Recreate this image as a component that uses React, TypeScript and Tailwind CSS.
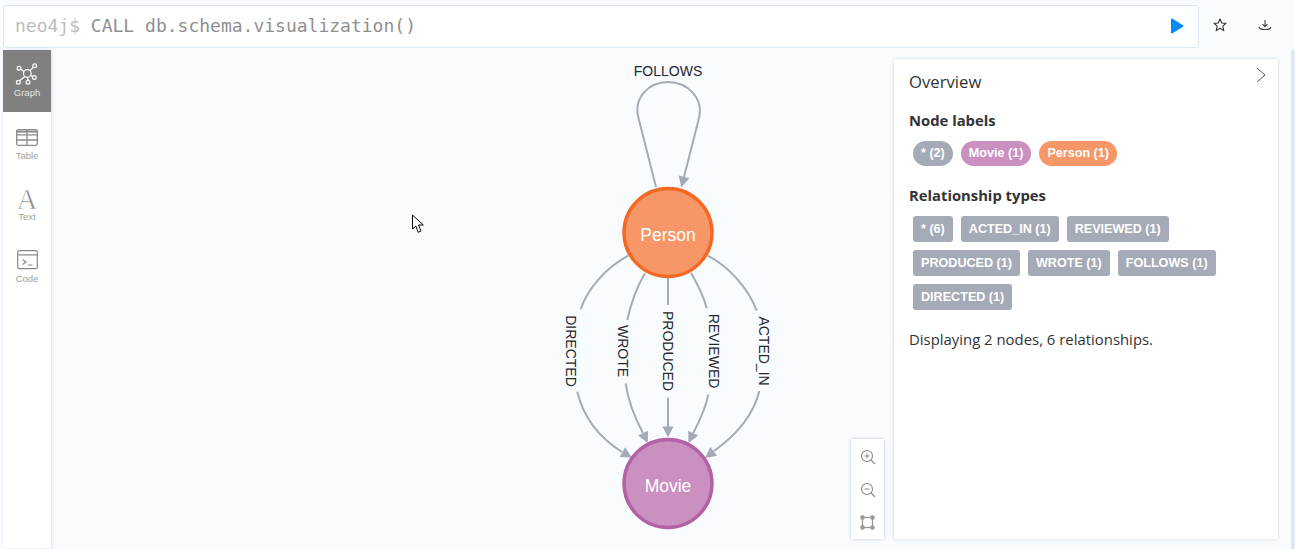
import React from "react";

const EDGE = "#a5abb6";

function Arrow({ tip, from }: { tip: [number, number]; from: [number, number] }) {
  const dx = tip[0] - from[0];
  const dy = tip[1] - from[1];
  const l = Math.hypot(dx, dy);
  const ux = dx / l;
  const uy = dy / l;
  const bx = tip[0] - ux * 11;
  const by = tip[1] - uy * 11;
  const w = 5.6;
  return (
    <polygon
      fill={EDGE}
      points={`${tip[0]},${tip[1]} ${bx - uy * w},${by + ux * w} ${bx + uy * w},${by - ux * w}`}
    />
  );
}

function EdgeLabel({ x, y, children }: { x: number; y: number; children: string }) {
  return (
    <text
      transform={`translate(${x} ${y}) rotate(90)`}
      textAnchor="middle"
      fontSize="14"
      fill="#23252c"
      fontFamily="'Liberation Sans', sans-serif"
    >
      {children}
    </text>
  );
}

function Graph() {
  const line = { fill: "none", stroke: EDGE, strokeWidth: 2 };
  return (
    <svg className="block h-[499px] w-[843px]" viewBox="51 50 843 499">
      <path {...line} d="M656 187 L639 120 C632 97 650 82 668 82 C686 82 705 97 698.500 120 L684 177" />
      <Arrow tip={[681.300, 187.500]} from={[684, 177]} />
      <text x="668" y="76" textAnchor="middle" fontSize="14" fill="#23252c" fontFamily="'Liberation Sans', sans-serif">FOLLOWS</text>

      <path {...line} d="M628.300 255.700 C605 268 587 290 580.700 309.300" />
      <path {...line} d="M577.300 391.700 C584 420 600 438 622 452" />
      <Arrow tip={[632, 457.500]} from={[622, 452]} />
      <EdgeLabel x={566} y={351}>DIRECTED</EdgeLabel>

      <path {...line} d="M645 273.300 C638 285 631 303 627.300 320" />
      <path {...line} d="M625.700 383.300 C628 400 635 418 643 433" />
      <Arrow tip={[647.800, 443]} from={[643, 433]} />
      <EdgeLabel x={618} y={351}>WROTE</EdgeLabel>

      <path {...line} d="M668 277 L668 305" />
      <path {...line} d="M668 397.700 L668 427" />
      <Arrow tip={[668, 437.500]} from={[668, 427]} />
      <EdgeLabel x={663} y={351}>PRODUCED</EdgeLabel>

      <path {...line} d="M691 272.700 C698 285 704 297 706.700 308.300" />
      <path {...line} d="M708.300 394.300 C706 408 700 420 693.300 433" />
      <Arrow tip={[688.500, 443]} from={[693.300, 433]} />
      <EdgeLabel x={708.500} y={351}>REVIEWED</EdgeLabel>

      <path {...line} d="M707.700 255.700 C730 267 749 290 756.700 310.700" />
      <path {...line} d="M759.300 391 C753 417 735 436 714 451" />
      <Arrow tip={[705, 458]} from={[714, 451]} />
      <EdgeLabel x={759} y={351}>ACTED_IN</EdgeLabel>

      <circle cx="668" cy="232.500" r="44" fill="#f79767" stroke="#f36924" strokeWidth="3.500" />
      <text x="668" y="240.500" textAnchor="middle" fontSize="17.500" fill="#ffffff" fontFamily="'Liberation Sans', sans-serif">Person</text>
      <circle cx="668" cy="483.500" r="44" fill="#c990c0" stroke="#b261a5" strokeWidth="3.500" />
      <text x="668" y="491.500" textAnchor="middle" fontSize="17.500" fill="#ffffff" fontFamily="'Liberation Sans', sans-serif">Movie</text>

      <path
        d="M412.500 215 L412.500 229 L415.800 226 L418.300 232.300 L421 231 L418.500 225 L423.300 225 Z"
        fill="#ffffff"
        stroke="#000000"
        strokeWidth="1"
        strokeLinejoin="round"
      />
    </svg>
  );
}

function GraphIcon({ color }: { color: string }) {
  return (
    <svg width="24" height="24" viewBox="0 0 24 24" fill="none" stroke={color} strokeWidth="1.200">
      <circle cx="12.300" cy="10.500" r="3.800" />
      <circle cx="4" cy="5.300" r="1.900" />
      <circle cx="19.700" cy="2.700" r="1.900" />
      <circle cx="19.300" cy="14.500" r="1.900" />
      <circle cx="13" cy="19.300" r="1.900" />
      <circle cx="3.300" cy="19.300" r="1.900" />
      <path d="M5.600 6.300 L9.200 8.500 M18.400 4.100 L15 7.800 M17.600 13.700 L15.700 12.300 M12.700 14.300 L12.900 17.400 M4.500 17.800 L10 13.500" />
    </svg>
  );
}

function TableIcon() {
  return (
    <svg width="22" height="17" viewBox="0 0 22 17" fill="none" stroke="#8a8a8a" strokeWidth="1.300">
      <rect x="0.700" y="0.700" width="20.600" height="15.600" rx="1.500" />
      <path d="M0.700 5.800 H21.300 M0.700 11 H21.300 M11 0.700 V16.300" />
      <path d="M0.700 2.600 H21.300" strokeWidth="2" />
    </svg>
  );
}

function CodeIcon() {
  return (
    <svg width="21" height="20" viewBox="0 0 21 20" fill="none" stroke="#8a8a8a" strokeWidth="1.200">
      <rect x="0.700" y="0.700" width="19.600" height="18" rx="1.500" />
      <path d="M0.700 4.800 H20.300 M5.500 9.500 L9 12 L5.500 14.500 M11 15 H15.500" />
    </svg>
  );
}

function NavItem({
  label,
  active,
  icon,
  className,
}: {
  label: string;
  active?: boolean;
  icon: React.ReactNode;
  className?: string;
}) {
  return (
    <div
      className={`flex h-[62px] flex-col items-center font-['Liberation_Sans',sans-serif] text-[9.500px] leading-[12px] ${
        active ? "bg-[#808080] text-[#e6e6e6]" : "text-[#a0a0a0]"
      } ${className ?? ""}`}
    >
      {icon}
      <span>{label}</span>
    </div>
  );
}

function Chip({ children, pill }: { children: string; pill?: string }) {
  return (
    <span
      className={`flex items-center px-[8px] font-['Liberation_Sans',sans-serif] text-[12.600px] font-bold text-white ${
        pill ? `h-[25px] rounded-[12.500px] ${pill}` : "h-[26px] rounded-[3px] bg-[#a5abb6]"
      }`}
    >
      {children}
    </span>
  );
}

export default function App() {
  return (
    <div className="h-[549px] w-[1295px] overflow-hidden bg-[#f9fcff]">
      <div className="flex h-[50px] pl-[3px] pt-[5px]">
        <div className="flex h-[43px] w-[1196px] items-center justify-between rounded-[3px] border border-[#dce7f2] bg-white pb-[2px] pl-[11px] pr-[14px]">
          <div className="font-['DejaVu_Sans_Mono',monospace] text-[18px] whitespace-pre">
            <span className="text-[#bcbcbc]">neo4j$ </span>
            <span className="text-[#8f8f8f]">CALL db.schema.visualization()</span>
          </div>
          <svg width="14" height="16" viewBox="0 0 14 16">
            <path d="M1 1.500 V14.500 C1 15.300 1.800 15.700 2.500 15.300 L13 8.800 C13.600 8.400 13.600 7.600 13 7.200 L2.500 0.700 C1.800 0.300 1 0.700 1 1.500 Z" fill="#018bff" />
          </svg>
        </div>
        <div className="flex w-[44px] items-center justify-center self-stretch pb-[5px] pr-[3px]">
          <svg width="14" height="14" viewBox="0 0 14 14" fill="none" stroke="#333" strokeWidth="1.100" strokeLinejoin="round">
            <path d="M7 1 L8.800 5 L13 5.400 L9.800 8.200 L10.800 12.600 L7 10.300 L3.200 12.600 L4.200 8.200 L1 5.400 L5.200 5 Z" />
          </svg>
        </div>
        <div className="flex w-[44px] items-center justify-center self-stretch pb-[5px]">
          <svg width="14" height="14" viewBox="0 0 14 14" fill="none" stroke="#444" strokeWidth="1.100">
            <path d="M7 2 V8.500 M4.500 6.200 L7 8.700 L9.500 6.200 M1 9 C1.500 11 3 11.500 7 11.500 C11 11.500 12.500 11 13 9" />
          </svg>
        </div>
      </div>
      <div className="flex h-[499px] pl-[3px]">
        <div className="mb-[1px] w-[48px] rounded-bl-[3px] bg-white shadow-[1px_0_3px_rgba(120,140,170,0.25)]">
          <NavItem label="Graph" active className="pt-[13px]" icon={<GraphIcon color="#ffffff" />} />
          <NavItem label="Table" className="pt-[17px]" icon={<div className="mb-[4px]"><TableIcon /></div>} />
          <NavItem
            label="Text"
            className="pt-[13px]"
            icon={
              <span className="h-[24px] font-['Liberation_Serif',serif] text-[29px] leading-[24px] text-[#8a8a8a] [-webkit-text-stroke:0.6px_white]">A</span>
            }
          />
          <NavItem label="Code" className="pt-[14px]" icon={<div className="mb-[3px]"><CodeIcon /></div>} />
        </div>
        <div className="relative w-[843px]">
          <Graph />
          <div className="absolute right-[10px] bottom-[10px] flex h-[100px] w-[33px] flex-col items-center bg-white pt-[1px] shadow-[0_0_3px_rgba(120,140,170,0.45)]">
            <div className="flex h-[33px] items-center">
              <svg width="16" height="16" viewBox="0 0 16 16" fill="none" stroke="#8a8a8a" strokeWidth="1.100">
                <circle cx="7" cy="7" r="5.500" />
                <path d="M11 11 L15 15 M4.500 7 H9.500 M7 4.500 V9.500" />
              </svg>
            </div>
            <div className="flex h-[33px] items-center">
              <svg width="16" height="16" viewBox="0 0 16 16" fill="none" stroke="#8a8a8a" strokeWidth="1.100">
                <circle cx="7" cy="7" r="5.500" />
                <path d="M11 11 L15 15 M4.500 7 H9.500" />
              </svg>
            </div>
            <div className="flex h-[33px] items-center">
              <svg width="15" height="15" viewBox="0 0 15 15" fill="none" stroke="#9a9a9a" strokeWidth="1.300">
                <rect x="2.500" y="2.500" width="10" height="10" />
                <rect x="1" y="1" width="3" height="3" rx="1" fill="#9a9a9a" />
                <rect x="11" y="1" width="3" height="3" rx="1" fill="#9a9a9a" />
                <rect x="1" y="11" width="3" height="3" rx="1" fill="#9a9a9a" />
                <rect x="11" y="11" width="3" height="3" rx="1" fill="#9a9a9a" />
              </svg>
            </div>
          </div>
        </div>
        <div className="relative mt-[9px] mb-[10px] w-[384px] bg-white px-[15px] font-['Open_Sans',sans-serif] text-[#333] shadow-[0_0_3px_rgba(120,140,170,0.35)]">
          <svg className="absolute top-[8px] right-[11px]" width="12" height="16" viewBox="0 0 12 16" fill="none" stroke="#555" strokeWidth="1">
            <path d="M2 1 L10 8 L2 15" />
          </svg>
          <h2 className="pt-[12px] text-[16.700px] leading-[22px] font-normal">Overview</h2>
          <h3 className="mt-[17px] text-[14.800px] leading-[20px] font-bold">Node labels</h3>
          <div className="mt-[11px] flex gap-x-[8px] pl-[4px]">
            <Chip pill="bg-[#a5abb6]">* (2)</Chip>
            <Chip pill="bg-[#c990c0]">Movie (1)</Chip>
            <Chip pill="bg-[#f79767]">Person (1)</Chip>
          </div>
          <h3 className="mt-[19px] text-[14.800px] leading-[20px] font-bold">Relationship types</h3>
          <div className="mt-[11px] flex flex-wrap gap-x-[8px] gap-y-[8px] pl-[4px]">
            <Chip>* (6)</Chip>
            <Chip>ACTED_IN (1)</Chip>
            <Chip>REVIEWED (1)</Chip>
            <Chip>PRODUCED (1)</Chip>
            <Chip>WROTE (1)</Chip>
            <Chip>FOLLOWS (1)</Chip>
            <Chip>DIRECTED (1)</Chip>
          </div>
          <p className="mt-[19px] text-[14.900px] leading-[20px]">Displaying 2 nodes, 6 relationships.</p>
        </div>
        <div className="ml-[13px] w-[4px] bg-[#dde8f3]" />
      </div>
    </div>
  );
}
